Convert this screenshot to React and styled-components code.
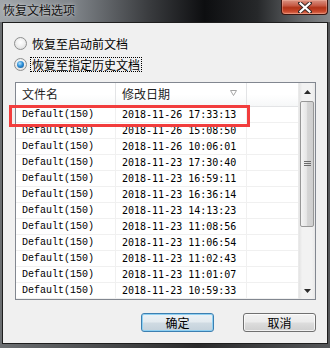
import React from 'react';
import styled, { createGlobalStyle } from 'styled-components';

const GlobalStyle = createGlobalStyle`
  html, body {
    margin: 0;
    padding: 0;
    background: #4a4a4a;
  }
  * {
    box-sizing: border-box;
  }
`;

const Window = styled.div`
  width: 330px;
  height: 348px;
  display: flex;
  flex-direction: column;
  background: linear-gradient(90deg, #6c6f72 0%, #3a3b3c 45%, #2a2a2b 60%, #555759 100%);
  font-family: "Noto Sans CJK SC", "Noto Sans", sans-serif;
  overflow: hidden;
`;

const TitleBar = styled.div`
  height: 22px;
  flex: none;
  display: flex;
  align-items: flex-start;
  justify-content: space-between;
  padding-left: 3px;
  background: linear-gradient(90deg, #a2a7ab 0%, #80858a 22%, #3a3c3f 45%, #0d0e10 62%, #26282a 78%, #676a6d 92%, #84878a 100%);
`;

const Title = styled.div`
  font-size: 12px;
  line-height: 20px;
  color: #111;
  text-shadow: 0 0 5px rgba(255, 255, 255, 0.55), 0 0 2px rgba(255, 255, 255, 0.4);
`;

const CloseButton = styled.div`
  width: 47px;
  height: 15px;
  margin-right: 2px;
  display: flex;
  align-items: center;
  justify-content: center;
  border: 1px solid #3b1510;
  border-top: none;
  border-radius: 0 0 4px 4px;
  background: linear-gradient(180deg, #d99383 0%, #c65a45 40%, #b03318 55%, #c7462a 80%, #e0765a 100%);
  box-shadow: inset 0 0 0 1px rgba(255, 200, 180, 0.35);
`;

const Client = styled.div`
  flex: 1;
  margin: 0 2px 4px 2px;
  border: 1px solid #1e1e1e;
  background: #f0f0f0;
  display: flex;
  flex-direction: column;
  padding: 10px 10px 0 11px;
  position: relative;
`;

const RadioRow = styled.label`
  height: 21px;
  display: flex;
  align-items: center;
  gap: 3px;
  font-size: 12px;
  color: #000;
`;

const RadioCircle = styled.span`
  width: 13px;
  height: 13px;
  border-radius: 50%;
  border: 1px solid #8e8f8f;
  background: radial-gradient(circle at 50% 40%, #ffffff 0%, #f0f0f0 45%, #d5d5d5 100%);
  display: flex;
  align-items: center;
  justify-content: center;
  flex: none;
  &::after {
    content: '';
    display: ${({ checked }) => (checked ? 'block' : 'none')};
    width: 7px;
    height: 7px;
    border-radius: 50%;
    background: radial-gradient(circle at 40% 35%, #b6e4fb 0%, #2d8ed8 45%, #0c4e8a 100%);
  }
`;

const RadioLabel = styled.span`
  padding: 0 1px;
  line-height: 13px;
  border: 1px dotted ${({ focused }) => (focused ? '#000' : 'transparent')};
`;

const ListBox = styled.div`
  margin-top: 7px;
  margin-left: 1px;
  width: 301px;
  height: 218px;
  border: 1px solid #828790;
  background: #fff;
  display: flex;
  position: relative;
`;

const Table = styled.div`
  flex: 1;
  display: flex;
  flex-direction: column;
  overflow: hidden;
`;

const Header = styled.div`
  height: 24px;
  flex: none;
  display: flex;
  background: linear-gradient(180deg, #ffffff 0%, #ffffff 50%, #f6f7f8 100%);
  border-bottom: 1px solid #e3e4e6;
`;

const HeadCell = styled.div`
  width: ${({ w }) => (w ? `${w}px` : 'auto')};
  flex: ${({ w }) => (w ? 'none' : 1)};
  border-right: ${({ w }) => (w ? '1px solid #e3e4e6' : 'none')};
  display: flex;
  align-items: center;
  justify-content: space-between;
  padding: 0 9px 3px 6px;
  font-size: 12px;
  color: #1e1e1e;
`;

const Row = styled.div`
  height: 16px;
  flex: none;
  display: flex;
  border-bottom: 1px solid #f0f0f0;
`;

const Cell = styled.div`
  width: ${({ w }) => (w ? `${w}px` : 'auto')};
  flex: ${({ w }) => (w ? 'none' : 1)};
  border-right: ${({ w }) => (w ? '1px solid #f0f0f0' : 'none')};
  padding-left: 6px;
  font-family: ${({ mono }) => mono};
  font-size: 10px;
  line-height: 15px;
  color: #000;
  white-space: nowrap;
`;

const ScrollBar = styled.div`
  width: 17px;
  flex: none;
  display: flex;
  flex-direction: column;
  background: linear-gradient(90deg, #e3e3e3 0%, #f2f2f2 20%, #f2f2f2 80%, #e8e8e8 100%);
  border-left: 1px solid #eaeaea;
`;

const ArrowButton = styled.div`
  height: 17px;
  flex: none;
  display: flex;
  align-items: center;
  justify-content: center;
`;

const Track = styled.div`
  flex: 1;
  display: flex;
  flex-direction: column;
  padding: 1px 0;
`;

const Thumb = styled.div`
  height: 126px;
  margin: 0 1px;
  border: 1px solid #979797;
  border-radius: 2px;
  background: linear-gradient(90deg, #f4f4f4 0%, #e6e6e6 45%, #d4d4d4 55%, #cfcfcf 100%);
  display: flex;
  align-items: center;
  justify-content: center;
`;

const Highlight = styled.div`
  position: absolute;
  left: -7px;
  top: 22px;
  width: 241px;
  height: 22px;
  border: 3px solid #f23d3d;
  pointer-events: none;
`;

const ButtonBar = styled.div`
  margin-top: 13px;
  margin-right: 1px;
  display: flex;
  justify-content: flex-end;
  gap: 29px;
`;

const Button = styled.div`
  width: 73px;
  height: 19px;
  display: flex;
  align-items: center;
  justify-content: center;
  font-size: 12px;
  color: #000;
  border-radius: 3px;
  border: 1px solid ${({ primary }) => (primary ? '#3c7fb1' : '#707070')};
  background: ${({ primary }) =>
    primary
      ? 'linear-gradient(180deg, #ecf2f6 0%, #e3eaef 48%, #d0dbe3 52%, #c4d1db 100%)'
      : 'linear-gradient(180deg, #f2f2f2 0%, #ebebeb 48%, #dddddd 52%, #cfcfcf 100%)'};
  box-shadow: ${({ primary }) =>
    primary ? 'inset 0 0 0 1px #8fd0f2' : 'inset 0 0 0 1px rgba(255,255,255,0.7)'};
`;

const rows = [
  ['2018-11-26', '17:33:13'],
  ['2018-11-26', '15:08:50'],
  ['2018-11-26', '10:06:01'],
  ['2018-11-23', '17:30:40'],
  ['2018-11-23', '16:59:11'],
  ['2018-11-23', '16:36:14'],
  ['2018-11-23', '14:13:23'],
  ['2018-11-23', '11:08:56'],
  ['2018-11-23', '11:06:54'],
  ['2018-11-23', '11:02:43'],
  ['2018-11-23', '11:01:07'],
  ['2018-11-23', '10:59:33'],
];

const NAME_FONT = '"Liberation Mono", monospace';
const DATE_FONT = '"DejaVu Sans Mono", monospace';

const App = () => (
  <>
    <GlobalStyle />
    <Window>
      <TitleBar>
        <Title>恢复文档选项</Title>
        <CloseButton>
          <svg width="14" height="11" viewBox="0 0 14 11">
            <path
              d="M2 1 L12 10 M12 1 L2 10"
              stroke="#3a2a28"
              strokeWidth="4"
              strokeLinecap="square"
            />
            <path
              d="M2.5 1.5 L11.5 9.5 M11.5 1.5 L2.5 9.5"
              stroke="#ffffff"
              strokeWidth="2.2"
              strokeLinecap="square"
            />
          </svg>
        </CloseButton>
      </TitleBar>
      <Client>
        <RadioRow>
          <RadioCircle />
          <RadioLabel>恢复至启动前文档</RadioLabel>
        </RadioRow>
        <RadioRow>
          <RadioCircle checked />
          <RadioLabel focused>恢复至指定历史文档</RadioLabel>
        </RadioRow>
        <ListBox>
          <Table>
            <Header>
              <HeadCell w={100}>文件名</HeadCell>
              <HeadCell w={131}>
                <span>修改日期</span>
                <svg width="7" height="6" viewBox="0 0 7 6">
                  <path d="M0.5 0.5 H6.5 L3.5 5.5 Z" fill="none" stroke="#a5a5a5" strokeWidth="1" />
                </svg>
              </HeadCell>
              <HeadCell />
            </Header>
            {rows.map(([d, t], i) => (
              <Row key={i}>
                <Cell w={100} mono={NAME_FONT}>Default(150)</Cell>
                <Cell w={131} mono={DATE_FONT}>{`${d} ${t}`}</Cell>
                <Cell />
              </Row>
            ))}
          </Table>
          <ScrollBar>
            <ArrowButton>
              <svg width="7" height="4" viewBox="0 0 7 4">
                <path d="M0 4 L3.5 0 L7 4 Z" fill="#2a2a2a" />
              </svg>
            </ArrowButton>
            <Track>
              <Thumb>
                <svg width="7" height="6" viewBox="0 0 7 6">
                  <path d="M0 0.5 H7 M0 2.5 H7 M0 4.5 H7" stroke="#6a6a6a" strokeWidth="1" />
                </svg>
              </Thumb>
            </Track>
            <ArrowButton>
              <svg width="7" height="4" viewBox="0 0 7 4">
                <path d="M0 0 L3.5 4 L7 0 Z" fill="#2a2a2a" />
              </svg>
            </ArrowButton>
          </ScrollBar>
          <Highlight />
        </ListBox>
        <ButtonBar>
          <Button primary>确定</Button>
          <Button>取消</Button>
        </ButtonBar>
      </Client>
    </Window>
  </>
);

export default App;
